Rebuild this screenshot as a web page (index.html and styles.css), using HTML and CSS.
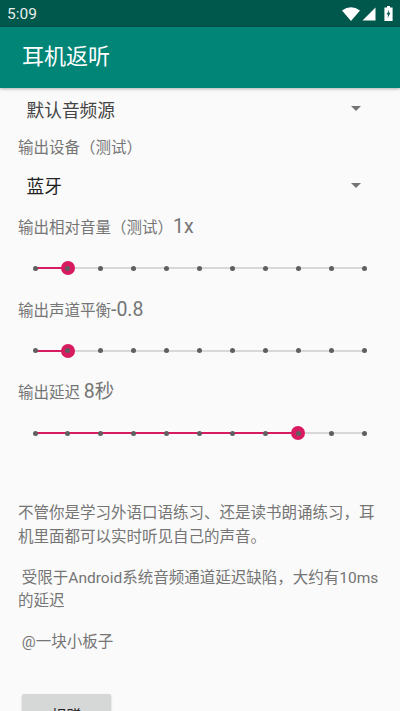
FILE: index.html
```html
<!DOCTYPE html>
<html lang="zh-CN">
<head>
  <meta charset="UTF-8" />
  <title>耳机返听</title>
  <meta name="viewport" content="width=device-width, initial-scale=1.0" />
  <link rel="stylesheet" href="styles.css">
</head>
<body>
  <div class="status-bar">
    <span class="clock">5:09</span>
    <div class="status-icons">
      <svg class="icon-wifi" width="18" height="14" viewBox="0 0 18 14"><path d="M0 3.4 Q9 -2.8 18 3.4 L9 14 Z" fill="#fff"/></svg>
      <svg class="icon-signal" width="14" height="14" viewBox="0 0 14 14"><path d="M13.5 0.5 V13.5 H0.5 Z" fill="#fff"/></svg>
      <svg class="icon-battery" width="9" height="15" viewBox="0 0 9 15"><path d="M3 0 H6 V1.4 H8.6 V15 H0.4 V1.4 H3 Z" fill="#fff"/><path d="M5.2 3.4 L2.6 8.6 H4.2 L3.6 12.2 L6.4 6.8 H4.7 Z" fill="#00574b"/></svg>
    </div>
  </div>
  <div class="app-bar">耳机返听</div>

  <div class="content">
    <div class="spinner spinner-first">
      <span class="spinner-text muted">默认音频源</span>
      <span class="arrow"></span>
    </div>

    <div class="label label-device">输出设备（测试）</div>
    <div class="spinner">
      <span class="spinner-text">蓝牙</span>
      <span class="arrow"></span>
    </div>

    <div class="label label-tall">输出相对音量（测试）<span class="value">1x</span></div>
    <div class="slider" data-value="1"></div>

    <div class="label label-tall">输出声道平衡<span class="value">-0.8</span></div>
    <div class="slider" data-value="1"></div>

    <div class="label label-tall">输出延迟 <span class="value">8秒</span></div>
    <div class="slider" data-value="8"></div>

    <div class="about">
      <p>不管你是学习外语口语练习、还是读书朗诵练习，耳机里面都可以实时听见自己的声音。</p>
      <p>&nbsp;受限于Android系统音频通道延迟缺陷，大约有10ms的延迟</p>
      <p>&nbsp;@一块小板子</p>
    </div>

    <button class="donate">捐赠</button>
  </div>

  <script>
    // 10 steps, 11 dots
    document.querySelectorAll('.slider').forEach(function (slider) {
      const value = Number(slider.dataset.value);
      const fill = document.createElement('div');
      fill.className = 'slider-fill';
      fill.style.width = value * 10 + '%';
      slider.appendChild(fill);
      const thumb = document.createElement('span');
      thumb.className = 'thumb';
      thumb.style.left = value * 10 + '%';
      slider.appendChild(thumb);
      for (let i = 0; i <= 10; i++) {
        const dot = document.createElement('span');
        dot.className = 'tick';
        dot.style.left = i * 10 + '%';
        slider.appendChild(dot);
      }
    });
  </script>
</body>
</html>
```

FILE: styles.css
```css
html, body {
  margin: 0;
  height: 711px;
  overflow: hidden;
}
body {
  font-family: Roboto, "Noto Sans CJK SC", sans-serif;
  background: #fafafa;
  color: #757575;
}
.status-bar {
  height: 27px;
  background: #00574b;
  color: #fff;
  display: flex;
  align-items: center;
  justify-content: space-between;
  padding: 0 7px;
  box-sizing: border-box;
}
.clock {
  font-size: 15.5px;
  opacity: 0.9;
}
.status-icons {
  display: flex;
  align-items: center;
  gap: 2px;
}
.icon-battery {
  margin-left: 6px;
}
.app-bar {
  height: 61px;
  background: #008577;
  color: #fff;
  font-size: 22px;
  line-height: 60px;
  padding-left: 22px;
  box-shadow: 0 1px 3px rgba(0, 0, 0, 0.3);
  position: relative;
}
.content {
  padding: 0 18px;
}
.spinner {
  height: 42px;
  display: flex;
  align-items: center;
  justify-content: space-between;
  padding: 0 21px 0 8.5px;
}
.spinner-first {
  height: 41px;
}
.spinner-text {
  font-size: 17.7px;
  color: #222;
}
.spinner-text.muted {
  color: #444;
}
.arrow {
  width: 0;
  height: 0;
  border-left: 5px solid transparent;
  border-right: 5px solid transparent;
  border-top: 5px solid #757575;
}
.label {
  font-size: 15.5px;
  line-height: 24px;
}
.label-device {
  margin-top: 7px;
  margin-bottom: 4px;
}
.label-tall {
  line-height: 28px;
  margin-top: 7px;
}
.value {
  font-size: 19.5px;
}
.slider {
  position: relative;
  height: 2px;
  margin: 25px 18px 26.5px 17px;
  background: #d8d8d8;
}
.slider-fill {
  position: absolute;
  left: 0;
  top: 0;
  height: 2px;
  background: #d81b60;
}
.tick {
  position: absolute;
  top: 1px;
  width: 5px;
  height: 5px;
  margin: -2.5px 0 0 -2.5px;
  border-radius: 50%;
  background: #5f5f5f;
}
.thumb {
  position: absolute;
  top: 1px;
  width: 14px;
  height: 14px;
  margin: -7px 0 0 -7px;
  border-radius: 50%;
  background: #d81b60;
}
.about {
  margin-top: 68px;
  font-size: 15.5px;
  line-height: 23.5px;
}
.about p {
  margin: 0 0 17.5px 0;
}
.donate {
  display: block;
  margin: 39px 0 0 4px;
  width: 89px;
  height: 42px;
  border: none;
  border-radius: 2px;
  background: #d6d7d7;
  color: #222;
  font-family: inherit;
  font-size: 15px;
  box-shadow: 0 1px 2px rgba(0, 0, 0, 0.25);
}
```
